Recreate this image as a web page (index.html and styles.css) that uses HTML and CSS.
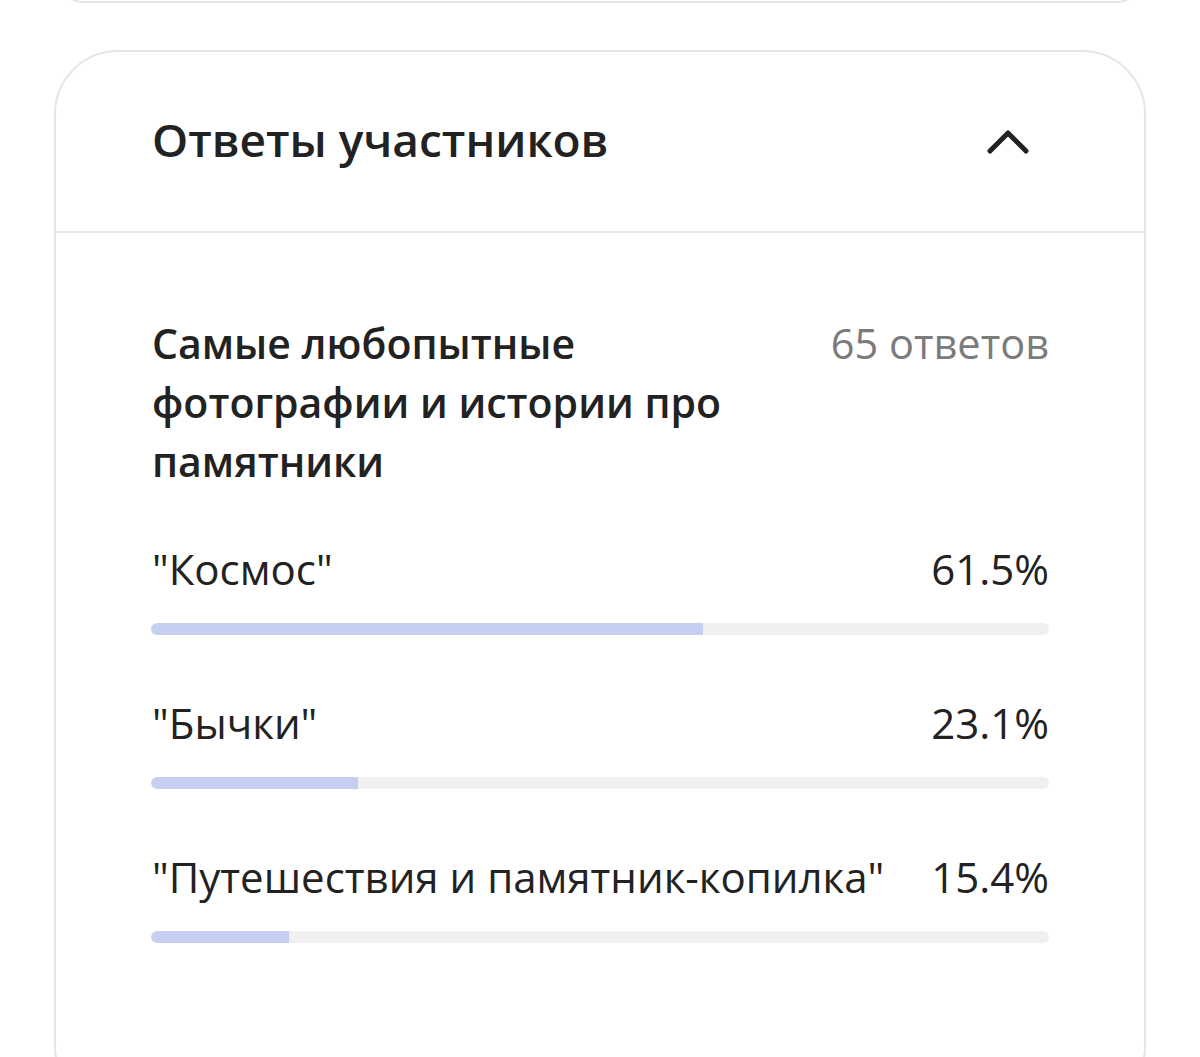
FILE: index.html
```html
<!DOCTYPE html>
<html lang="ru">
<head>
<meta charset="utf-8">
<title>Ответы участников</title>
<link rel="stylesheet" href="styles.css">
</head>
<body>
<div class="prev-card"></div>
<section class="card">
  <header class="card-head">
    <h2 class="card-title">Ответы участников</h2>
    <svg class="chevron" width="48" height="30" viewBox="0 0 48 30" aria-hidden="true">
      <path d="M6 25 L24 7 L42 25" fill="none" stroke="#222" stroke-width="5" stroke-linecap="round" stroke-linejoin="round"/>
    </svg>
  </header>
  <div class="card-body">
    <div class="question">
      <h3 class="question-text">Самые любопытные фотографии и истории про памятники</h3>
      <span class="question-count">65 ответов</span>
    </div>
    <ul class="options">
      <li class="option">
        <div class="option-row"><span class="option-label">"Космос"</span><span class="option-pct">61.5%</span></div>
        <div class="bar"><div class="bar-fill" style="width:61.5%"></div></div>
      </li>
      <li class="option">
        <div class="option-row"><span class="option-label">"Бычки"</span><span class="option-pct">23.1%</span></div>
        <div class="bar"><div class="bar-fill" style="width:23.1%"></div></div>
      </li>
      <li class="option">
        <div class="option-row"><span class="option-label">"Путешествия и памятник-копилка"</span><span class="option-pct">15.4%</span></div>
        <div class="bar"><div class="bar-fill" style="width:15.4%"></div></div>
      </li>
    </ul>
  </div>
</section>
</body>
</html>
```
FILE: styles.css
```css
html, body {
  margin: 0;
  padding: 0;
  background: #fff;
  overflow: hidden;
}
body {
  font-family: "Open Sans", "Noto Sans", sans-serif;
  color: #222;
}
.prev-card {
  margin: -57px 54px 0;
  height: 60px;
  box-sizing: border-box;
  border: 2px solid #e6e6e6;
  border-radius: 62px;
}
.card {
  margin: 47px 54px 0;
  height: 1060px;
  box-sizing: border-box;
  border: 2px solid #e6e6e6;
  border-radius: 64px;
}
.card-head {
  height: 179px;
  display: flex;
  align-items: center;
  justify-content: space-between;
  padding: 0 112px 0 96px;
  border-bottom: 2px solid #e6e6e6;
}
.card-title {
  margin: -6px 0 0;
  font-size: 46px;
  font-weight: 600;
  line-height: 56px;
  color: #222;
}
.chevron {
  display: block;
  margin-top: -2px;
}
.card-body {
  padding: 81px 95px 0;
}
.question {
  display: flex;
  justify-content: space-between;
  align-items: flex-start;
}
.question-text {
  margin: 0 0 0 1px;
  width: 600px;
  font-size: 41px;
  font-weight: 600;
  line-height: 59px;
}
.question-count {
  font-size: 41.5px;
  line-height: 59px;
  color: #7b7b7b;
}
.options {
  list-style: none;
  margin: 53px 0 0;
  padding: 0;
}
.option + .option {
  margin-top: 63px;
}
.option-row {
  display: flex;
  justify-content: space-between;
  gap: 40px;
  padding-left: 1px;
  font-size: 42px;
  line-height: 50px;
}
.bar {
  margin-top: 29px;
  height: 12px;
  border-radius: 6px;
  background: #f0f0f0;
  overflow: hidden;
}
.bar-fill {
  height: 100%;
  background: #c4cff2;
  border-radius: 6px 0 0 6px;
}
```
